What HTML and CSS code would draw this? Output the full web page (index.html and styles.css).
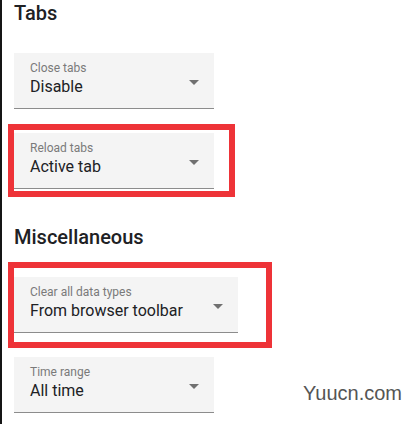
FILE: index.html
```html
<!DOCTYPE html>
<html lang="en">
<head>
  <meta charset="UTF-8">
  <title>Settings</title>
  <link rel="stylesheet" href="styles.css">
</head>
<body>

  <div class="page">

    <!-- Tabs -->
    <section class="group">
      <h2>Tabs</h2>
      <div class="fields">
        <div class="select">
          <div class="select-text">
            <span class="select-label">Close tabs</span>
            <span class="select-value">Disable</span>
          </div>
          <span class="select-arrow"></span>
        </div>
        <div class="select marked marked-reload">
          <div class="select-text">
            <span class="select-label">Reload tabs</span>
            <span class="select-value">Active tab</span>
          </div>
          <span class="select-arrow"></span>
        </div>
      </div>
    </section>

    <!-- Miscellaneous -->
    <section class="group">
      <h2>Miscellaneous</h2>
      <div class="fields">
        <div class="select marked marked-clear">
          <div class="select-text">
            <span class="select-label">Clear all data types</span>
            <span class="select-value">From browser toolbar</span>
          </div>
          <span class="select-arrow"></span>
        </div>
        <div class="select">
          <div class="select-text">
            <span class="select-label">Time range</span>
            <span class="select-value">All time</span>
          </div>
          <span class="select-arrow"></span>
        </div>
      </div>
    </section>

  </div>

  <span class="watermark">Yuucn.com</span>

</body>
</html>
```

FILE: styles.css
```css
/* ====== page ====== */
body {
  margin: 0;
  background: #fff;
  font-family: Roboto, "Noto Sans", Arial, sans-serif;
  color: #202124;
}
.page {
  box-sizing: border-box;
  min-height: 424px;
  padding: 1px 0 0 12px;
  border-left: 2px solid #151515;
}
.group + .group {
  margin-top: 36px;
}
.group h2 {
  margin: 0 0 28px;
  font-size: 20px;
  font-weight: 500;
  line-height: 24px;
  color: #202124;
}
.fields {
  display: flex;
  flex-direction: column;
  align-items: flex-start;
  gap: 24px;
}

/* ====== select (filled) ====== */
.select {
  display: inline-grid;
  grid-template-columns: 1fr auto;
  box-sizing: border-box;
  min-width: 200px;
  height: 56px;
  padding: 7px 15px 11px 16px;
  background: #f4f4f4;
  border-bottom: 1px solid #8c8c8c;
}
.select-text {
  display: flex;
  flex-direction: column;
}
.select-label {
  font-size: 12px;
  line-height: 16px;
  color: #7a7a7a;
}
.select-value {
  margin-top: 1px;
  font-size: 16px;
  line-height: 20px;
  color: #202124;
  white-space: nowrap;
}
.select-arrow {
  align-self: center;
  width: 0;
  height: 0;
  margin: 7px 0 0 30px;
  border-left: 5px solid transparent;
  border-right: 5px solid transparent;
  border-top: 5px solid #707070;
}

/* ====== red annotation boxes ====== */
.marked {
  position: relative;
}
.marked::after {
  content: "";
  position: absolute;
  border: 6px solid #ee3338;
  pointer-events: none;
}
.marked-reload::after {
  left: -6px;
  top: -9px;
  right: -21px;
  bottom: -9px;
}
.marked-clear::after {
  left: -6px;
  top: -15px;
  right: -34px;
  bottom: -16px;
}

/* ====== watermark ====== */
.watermark {
  position: absolute;
  top: 383px;
  right: 12px;
  font-family: "Liberation Sans", Arial, sans-serif;
  font-size: 20px;
  line-height: 20px;
  color: #555;
}
```
